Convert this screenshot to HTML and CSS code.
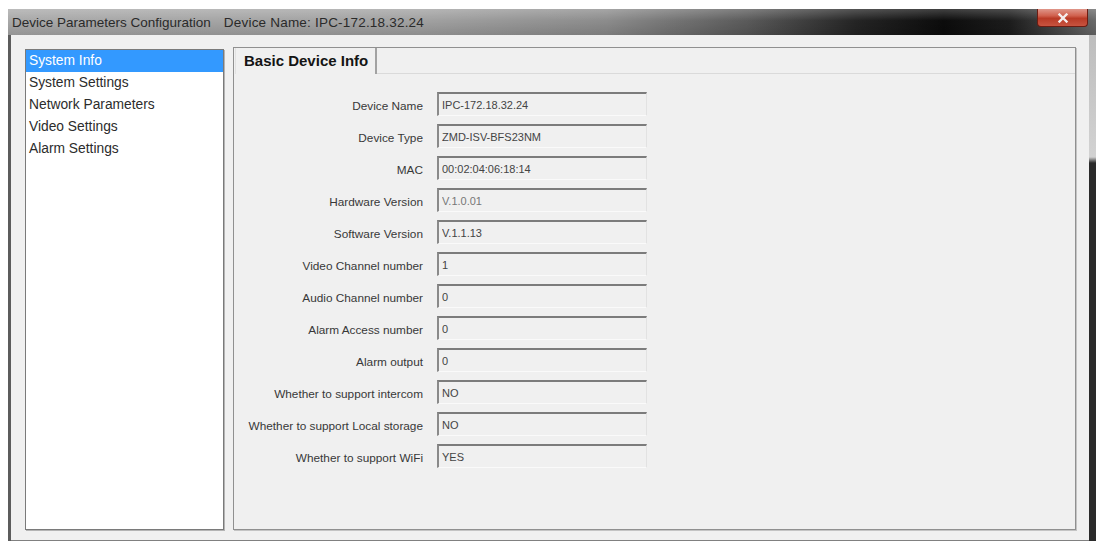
FILE: index.html
```html
<!DOCTYPE html>
<html lang="en">
<head>
    <meta charset="UTF-8">
    <title>Device Parameters Configuration</title>
    <link rel="stylesheet" href="styles.css">
</head>
<body>
    <div class="window">
        <div class="titlebar">
            <span class="title">Device Parameters Configuration</span>
            <span class="title-device">Device Name: IPC-172.18.32.24</span>
            <button class="close-btn" aria-label="Close">
                <svg width="12" height="10" viewBox="0 0 12 10">
                    <path d="M2.5 1.5 L9.5 8.5 M9.5 1.5 L2.5 8.5" stroke="#f4eeee" stroke-width="2.4" stroke-linecap="square"/>
                </svg>
            </button>
        </div>

        <div class="frame">
            <div class="client">
                <!-- left menu -->
                <ul class="nav-list">
                    <li class="nav-item selected">System Info</li>
                    <li class="nav-item">System Settings</li>
                    <li class="nav-item">Network Parameters</li>
                    <li class="nav-item">Video Settings</li>
                    <li class="nav-item">Alarm Settings</li>
                </ul>

                <!-- tab panel -->
                <div class="tab-panel">
                    <div class="tab-strip">
                        <div class="tab active">Basic Device Info</div>
                        <div class="tab-fill"></div>
                    </div>
                    <div class="tab-page">
                        <div class="form-grid">
                            <label class="field-label">Device Name</label>
                            <input class="field-value" readonly value="IPC-172.18.32.24">

                            <label class="field-label">Device Type</label>
                            <input class="field-value" readonly value="ZMD-ISV-BFS23NM">

                            <label class="field-label">MAC</label>
                            <input class="field-value" readonly value="00:02:04:06:18:14">

                            <label class="field-label">Hardware Version</label>
                            <input class="field-value muted" readonly value="V.1.0.01">

                            <label class="field-label">Software Version</label>
                            <input class="field-value" readonly value="V.1.1.13">

                            <label class="field-label">Video Channel number</label>
                            <input class="field-value" readonly value="1">

                            <label class="field-label">Audio Channel number</label>
                            <input class="field-value" readonly value="0">

                            <label class="field-label">Alarm Access number</label>
                            <input class="field-value" readonly value="0">

                            <label class="field-label">Alarm output</label>
                            <input class="field-value" readonly value="0">

                            <label class="field-label">Whether to support intercom</label>
                            <input class="field-value" readonly value="NO">

                            <label class="field-label">Whether to support Local storage</label>
                            <input class="field-value" readonly value="NO">

                            <label class="field-label">Whether to support WiFi</label>
                            <input class="field-value" readonly value="YES">
                        </div>
                    </div>
                </div>
            </div>
        </div>
    </div>
</body>
</html>
```

FILE: styles.css
```css
* {
    margin: 0;
    padding: 0;
    box-sizing: border-box;
}

body {
    font-family: "Liberation Sans", Arial, sans-serif;
    background: #fff;
    color: #222;
    overflow: hidden;
}

.window {
    width: 1088px;
    margin: 9px 0 0 8px;
}

/* title bar */
.titlebar {
    height: 26px;
    display: flex;
    align-items: center;
    padding-left: 4px;
    background:
        linear-gradient(to bottom, rgba(255,255,255,0.22) 0%, rgba(255,255,255,0) 45%, rgba(0,0,0,0.12) 100%),
        linear-gradient(to right, #a9a9a9 0%, #a1a1a1 38%, #8c8c8c 55%, #5a5a5a 68%, #242424 78%, #0c0c0c 86%, #1c1c1c 92%, #6a6a6a 100%);
}

.title,
.title-device {
    font-size: 13.5px;
    color: #2a2a2a;
    white-space: nowrap;
}

.title-device {
    margin-left: 13px;
    letter-spacing: 0.2px;
}

.close-btn {
    margin-left: auto;
    margin-right: 8px;
    align-self: flex-start;
    width: 51px;
    height: 18px;
    border: 1px solid #6d1c12;
    border-top: none;
    border-radius: 0 0 4px 4px;
    background: linear-gradient(to bottom, #df968a 0%, #d0604d 40%, #b93a26 55%, #c85440 100%);
    display: flex;
    align-items: center;
    justify-content: center;
}

/* window frame + client */
.frame {
    display: flex;
    border-left: 3px solid #5c5c5c;
    padding-right: 7px;
    background: linear-gradient(to bottom, #bdbdbd 0, #d2d2d2 122px, #2a2a2a 128px, #2a2a2a 100%);
}

.client {
    flex: 1;
    display: flex;
    gap: 9px;
    padding: 12px 13px 10px 14px;
    height: 506px;
    background: #f0f0f0;
    border-bottom: 1px solid #808080;
}

.nav-list {
    list-style: none;
    width: 199px;
    margin-top: 2px;
    background: #fff;
    border: 1px solid #7a7a7a;
    box-shadow: 1px 1px 0 #b4b4b4;
}

.nav-item {
    height: 22px;
    line-height: 22px;
    padding-left: 3px;
    font-size: 13.8px;
    color: #2c2c2c;
}

.nav-item.selected {
    background: #3399ff;
    color: #fff;
}

.tab-panel {
    flex: 1;
    display: flex;
    flex-direction: column;
    border: 1px solid #909090;
    box-shadow: 1px 1px 0 #c4c4c4;
}

.tab-strip {
    display: flex;
    height: 26px;
}

.tab {
    padding: 0 7px 0 8px;
    margin-left: 1px;
    line-height: 25px;
    font-size: 15px;
    font-weight: bold;
    color: #141414;
    border-left: 1px solid #e2e2e2;
    border-right: 2px solid #a2a2a2;
}

.tab-fill {
    flex: 1;
    border-bottom: 1px solid #dadada;
}

.tab-page {
    padding-top: 18px;
}

.form-grid {
    display: grid;
    grid-template-columns: 189px 210px;
    grid-auto-rows: 24px;
    column-gap: 14px;
    row-gap: 8px;
}

.field-label {
    text-align: right;
    font-size: 11.8px;
    line-height: 16px;
    padding-top: 6px;
    color: #383838;
    white-space: nowrap;
}

.field-value {
    height: 24px;
    padding-left: 3px;
    font-family: "Liberation Sans", Arial, sans-serif;
    font-size: 11px;
    color: #444;
    background: #f0f0f0;
    border-top: 2px solid #7c7c7c;
    border-left: 2px solid #8a8a8a;
    border-right: 1px solid #e2e2e2;
    border-bottom: 1px solid #fafafa;
    outline: none;
}

.field-value.muted {
    color: #777;
}
```
